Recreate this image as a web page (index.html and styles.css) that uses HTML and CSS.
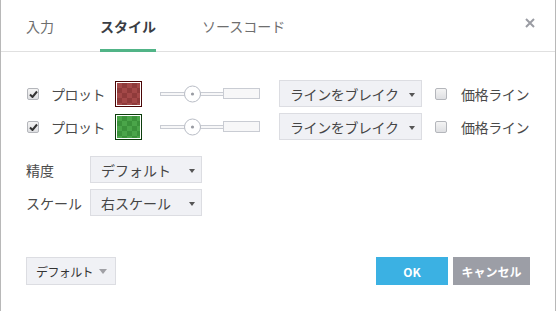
FILE: index.html
```html
<!DOCTYPE html>
<html lang="ja">
<head>
  <meta charset="UTF-8">
  <title>スタイル</title>
  <link rel="stylesheet" href="styles.css">
</head>
<body>
  <div class="dialog">
    <div class="header">
      <div class="tab">入力</div>
      <div class="tab active">スタイル</div>
      <div class="tab">ソースコード</div>
      <div class="close">
        <svg width="10" height="10" viewBox="0 0 10 10"><path d="M1 1 L9 9 M9 1 L1 9" stroke="#9a9ca3" stroke-width="2"/></svg>
      </div>
    </div>

    <div class="content">
      <div class="row">
        <span class="check checked"><svg width="9" height="8" viewBox="0 0 9 8"><path d="M1 4.5 L3.5 7 L8 1.5" stroke="#333" stroke-width="2" fill="none"/></svg></span>
        <span class="plot-label">プロット</span>
        <span class="swatch red"><span class="swatch-fill"></span></span>
        <svg class="slider" width="100" height="20" viewBox="0 0 100 20">
          <rect x="0.5" y="8.5" width="25" height="3" fill="#f7f7f8" stroke="#c9ccd3"/>
          <rect x="40.5" y="8.5" width="23" height="3" fill="#f7f7f8" stroke="#c9ccd3"/>
          <rect x="63.5" y="4.5" width="36" height="10" fill="#f7f7f8" stroke="#c9ccd3"/>
          <circle cx="32.5" cy="10" r="8" fill="#fff" stroke="#b9bdc6"/>
          <circle cx="32.5" cy="10" r="1.6" fill="#9a9ca3"/>
        </svg>
        <div class="select line-select">ラインをブレイク<span class="caret"></span></div>
        <span class="check"></span>
        <span class="price-label">価格ライン</span>
      </div>
      <div class="row">
        <span class="check checked"><svg width="9" height="8" viewBox="0 0 9 8"><path d="M1 4.5 L3.5 7 L8 1.5" stroke="#333" stroke-width="2" fill="none"/></svg></span>
        <span class="plot-label">プロット</span>
        <span class="swatch green"><span class="swatch-fill"></span></span>
        <svg class="slider" width="100" height="20" viewBox="0 0 100 20">
          <rect x="0.5" y="8.5" width="25" height="3" fill="#f7f7f8" stroke="#c9ccd3"/>
          <rect x="40.5" y="8.5" width="23" height="3" fill="#f7f7f8" stroke="#c9ccd3"/>
          <rect x="63.5" y="4.5" width="36" height="10" fill="#f7f7f8" stroke="#c9ccd3"/>
          <circle cx="32.5" cy="10" r="8" fill="#fff" stroke="#b9bdc6"/>
          <circle cx="32.5" cy="10" r="1.6" fill="#9a9ca3"/>
        </svg>
        <div class="select line-select">ラインをブレイク<span class="caret"></span></div>
        <span class="check"></span>
        <span class="price-label">価格ライン</span>
      </div>

      <div class="row option first">
        <span class="opt-label">精度</span>
        <div class="select opt-select">デフォルト<span class="caret"></span></div>
      </div>
      <div class="row option">
        <span class="opt-label">スケール</span>
        <div class="select opt-select">右スケール<span class="caret"></span></div>
      </div>
    </div>

    <div class="footer">
      <div class="btn-default">デフォルト<span class="caret light"></span></div>
      <div class="buttons">
        <div class="btn ok">OK</div>
        <div class="btn cancel">キャンセル</div>
      </div>
    </div>
  </div>
</body>
</html>
```

FILE: styles.css
```css
body {
  margin: 0;
  font-family: "Noto Sans CJK JP", "Noto Sans", sans-serif;
  background: #fff;
  color: #444;
}

.dialog {
  width: 556px;
  height: 311px;
  box-sizing: border-box;
  border-left: 1px solid #b8b8b8;
  border-right: 1px solid #b8b8b8;
  background: #fff;
}

.header {
  display: flex;
  height: 51px;
  padding-left: 25px;
  border-bottom: 1px solid #e0e0e0;
  position: relative;
}

.tab {
  display: flex;
  align-items: center;
  margin-right: 46px;
  font-size: 14px;
  line-height: 20px;
  color: #6e6e6e;
  white-space: nowrap;
}

.tab.active {
  font-weight: bold;
  color: #3a3d44;
  box-shadow: inset 0 -3px 0 #51b487;
  margin-bottom: -1px;
}

.close {
  position: absolute;
  right: 20px;
  top: 18px;
  width: 10px;
  height: 10px;
}

.close svg {
  display: block;
}

.content {
  padding: 28px 24px 0 26px;
}

.row {
  display: flex;
  align-items: center;
  height: 27px;
  margin-bottom: 6px;
  font-size: 14px;
  line-height: 20px;
  white-space: nowrap;
}

.check {
  width: 10px;
  height: 10px;
  border: 1px solid #b4b6bb;
  border-radius: 2px;
  background: linear-gradient(#f4f4f4, #dedfe2);
  display: flex;
  align-items: center;
  justify-content: center;
  flex: none;
}

.check svg {
  display: block;
}

.plot-label {
  width: 56px;
  flex: none;
  margin-left: 12px;
  margin-right: 8px;
  color: #4a4a4a;
  letter-spacing: -0.5px;
}

.swatch {
  width: 23px;
  height: 22px;
  border: 1px solid #4a0606;
  background: #fff;
  padding: 1px;
  box-sizing: content-box;
  display: flex;
  flex: none;
  margin-right: 18px;
}

.swatch.green {
  border-color: #0c3d0c;
}

.swatch-fill {
  flex: 1;
  background-size: 10px 10px;
  background-position: 0 0, 5px 5px;
}

.swatch.red .swatch-fill {
  background-color: #a34848;
  background-image:
    linear-gradient(45deg, #8f3b3b 25%, transparent 25%, transparent 75%, #8f3b3b 75%),
    linear-gradient(45deg, #8f3b3b 25%, transparent 25%, transparent 75%, #8f3b3b 75%);
}

.swatch.green .swatch-fill {
  background-color: #4aa549;
  background-image:
    linear-gradient(45deg, #3b923b 25%, transparent 25%, transparent 75%, #3b923b 75%),
    linear-gradient(45deg, #3b923b 25%, transparent 25%, transparent 75%, #3b923b 75%);
}

.slider {
  display: block;
  flex: none;
  margin-right: 19px;
}

.select {
  position: relative;
  height: 27px;
  box-sizing: border-box;
  border: 1px solid #dcdde2;
  background: #f0f1f5;
  display: flex;
  align-items: center;
  padding-left: 10px;
  color: #454545;
  font-size: 14px;
  flex: none;
  white-space: nowrap;
}

.line-select {
  width: 143px;
  margin-right: 13px;
  letter-spacing: -0.4px;
}

.caret {
  position: absolute;
  right: 6px;
  top: 12px;
  width: 0;
  height: 0;
  border-left: 3.5px solid transparent;
  border-right: 3.5px solid transparent;
  border-top: 4px solid #555;
}

.caret.light {
  right: 8px;
  top: 11px;
  border-left-width: 4px;
  border-right-width: 4px;
  border-top-width: 5px;
  border-top-color: #a0a0a5;
}

.price-label {
  margin-left: 14px;
  color: #4a4a4a;
  flex: none;
  letter-spacing: -0.4px;
}

.row.first {
  margin-top: 16px;
}

.opt-label {
  width: 64px;
  flex: none;
  margin-left: -1px;
  color: #4a4a4a;
}

.opt-select {
  width: 112px;
  padding-left: 10px;
}

.footer {
  display: flex;
  justify-content: space-between;
  align-items: center;
  margin-top: 41px;
  padding: 0 25px 0 25px;
}

.btn-default {
  position: relative;
  width: 90px;
  height: 28px;
  box-sizing: border-box;
  border: 1px solid #dcdde2;
  background: #f0f1f5;
  display: flex;
  align-items: center;
  padding-left: 9px;
  font-size: 12px;
  letter-spacing: -0.6px;
  color: #333;
  white-space: nowrap;
}

.buttons {
  display: flex;
  gap: 5px;
}

.btn {
  height: 28px;
  display: flex;
  align-items: center;
  justify-content: center;
  font-size: 12px;
  font-weight: bold;
  color: #fff;
  white-space: nowrap;
}

.btn.ok {
  width: 72px;
  background: #3bb1e3;
}

.btn.cancel {
  width: 77px;
  background: #9c9ea6;
}
```
